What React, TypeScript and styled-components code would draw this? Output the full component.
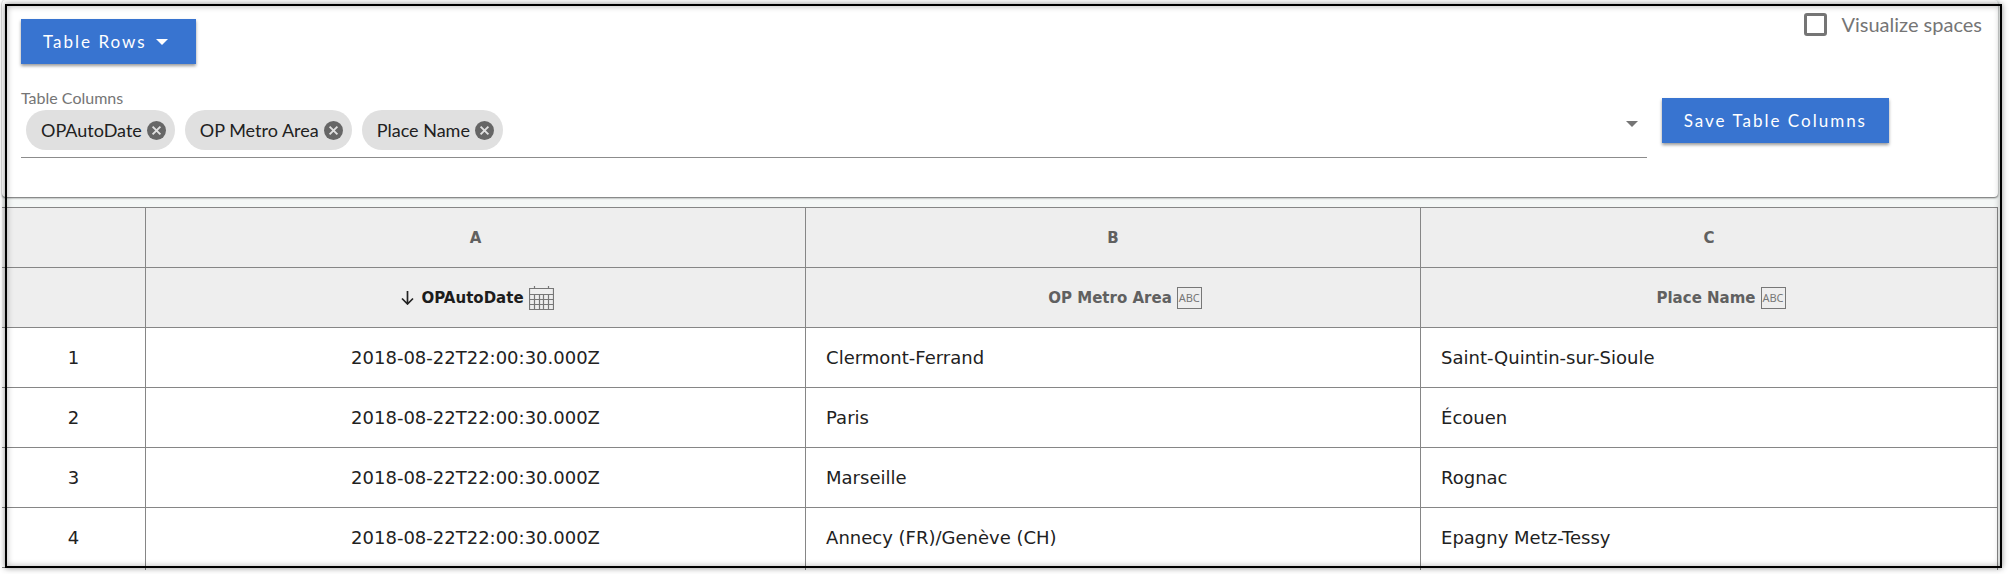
import React, { useState } from "react";
import styled, { createGlobalStyle } from "styled-components";

const GlobalStyle = createGlobalStyle`
  *, *::before, *::after { box-sizing: border-box; }
  body { margin: 0; background: #fff; }
`;

const UI_FONT = `Lato, "Liberation Sans", sans-serif`;
const GRID_FONT = `"DejaVu Sans", Verdana, sans-serif`;
const LINE = "#868686";

const Page = styled.div`
  position: relative;
  padding: 0 11px 4px 2px;
  font-family: ${UI_FONT};
  color: #212121;
`;

const Surface = styled.div`
  background: #f4f7f6;
  padding-right: 2px;
`;

const Frame = styled.div`
  position: absolute;
  inset: 4px 9px 6px 5px;
  border: 2px solid #000;
  box-shadow: 0 0 6px rgba(0, 0, 0, 0.45), inset 0 0 6px rgba(0, 0, 0, 0.3);
  pointer-events: none;
`;

const Card = styled.section`
  display: flex;
  flex-direction: column;
  gap: 26px;
  padding: 12px 16px 39px 19px;
  background: #fff;
  border-radius: 4px;
  box-shadow: 0 1px 2px rgba(0, 0, 0, 0.6);
`;

const TopBar = styled.div`
  display: flex;
  align-items: flex-end;
  justify-content: space-between;
  min-height: 52px;
`;

const Button = styled.button<{ $menu?: boolean }>`
  display: inline-flex;
  align-items: center;
  gap: 9px;
  height: 45px;
  padding: 0 ${(p) => (p.$menu ? 28 : 22)}px 0 22px;
  border: 0;
  background: #3874d0;
  color: #fff;
  font: 400 17px/24px ${UI_FONT};
  letter-spacing: 2px;
  white-space: nowrap;
  box-shadow: 0 2px 3px rgba(0, 0, 0, 0.4);
  cursor: pointer;
`;

const CheckLabel = styled.label`
  display: flex;
  align-items: center;
  align-self: flex-start;
  gap: 14px;
  color: #757575;
  font-size: 20px;
  line-height: 24px;
`;

const CheckBox = styled.input`
  appearance: none;
  width: 23px;
  height: 23px;
  margin: 0;
  border: 3px solid #757575;
  border-radius: 3px;
  background: #fff;
  &:checked { background: #3874d0; }
`;

const FieldRow = styled.div`
  display: flex;
  gap: 15px;
  padding-right: 93px;
`;

const Field = styled.div`
  flex: 1;
  border-bottom: 1px solid #8c8c8c;
`;

const FieldLabel = styled.label`
  display: block;
  color: #757575;
  font-size: 16px;
  line-height: 16px;
`;

const ChipBox = styled.div`
  display: flex;
  gap: 10px;
  padding: 4px 9px 7px 5px;
`;

const Chip = styled.span`
  display: inline-flex;
  align-items: center;
  gap: 5px;
  height: 40px;
  padding: 0 9px 0 15px;
  border-radius: 20px;
  background: #e0e0e0;
  font-size: 18px;
  line-height: 24px;
  white-space: nowrap;
`;

const IconButton = styled.button<{ $light?: boolean }>`
  display: inline-flex;
  align-items: center;
  justify-content: center;
  height: 28px;
  padding: 0;
  border: 0;
  background: none;
  color: ${(p) => (p.$light ? "#757575" : "#666")};
  cursor: pointer;
`;

const ChipInput = styled.input`
  flex: 1;
  min-width: 0;
  border: 0;
  outline: 0;
  background: none;
  font: 18px/24px ${UI_FONT};
`;

const Action = styled.div`
  display: flex;
  align-items: flex-start;
  padding-top: 8px;
`;

const Table = styled.table`
  width: 100%;
  margin-top: 10px;
  table-layout: fixed;
  border-collapse: separate;
  border-spacing: 0;
  border-top: 1px solid ${LINE};
  background: #fff;
  font-family: ${GRID_FONT};
`;

const Col = styled.col<{ $width?: string }>`
  width: ${(p) => p.$width ?? "auto"};
`;

const HeadCell = styled.th<{ $active?: boolean }>`
  height: 60px;
  padding: 0 20px;
  border-right: 1px solid ${LINE};
  border-bottom: 1px solid ${LINE};
  background: #eee;
  color: ${(p) => (p.$active ? "#1c1c1c" : "#606060")};
  font-size: 15px;
  font-weight: 700;
  line-height: 24px;
`;

const HeadContent = styled.span`
  display: flex;
  align-items: center;
  justify-content: center;
  gap: 5px;
`;

const SortSlot = styled.span`
  display: inline-flex;
  justify-content: center;
  width: 19px;
`;

const Cell = styled.td<{ $center?: boolean }>`
  height: 60px;
  padding: 0 20px;
  border-right: 1px solid ${LINE};
  border-bottom: 1px solid ${LINE};
  text-align: ${(p) => (p.$center ? "center" : "left")};
  font-size: 18px;
  line-height: 24px;
`;

const NextCell = styled.td`
  height: 2px;
  padding: 0;
  border-right: 1px solid ${LINE};
`;

const TextType = styled.span`
  display: inline-flex;
  align-items: center;
  justify-content: center;
  width: 25px;
  height: 22px;
  border: 1px solid #777;
  color: #777;
  font: 400 11px/12px "Noto Sans", sans-serif;
`;

const Caret = () => (
  <svg width="12" height="6" viewBox="0 0 12 6" aria-hidden="true">
    <path d="M0 0h12L6 6z" fill="currentColor" />
  </svg>
);

const RemoveIcon = () => (
  <svg width="19" height="19" viewBox="0 0 19 19" aria-hidden="true">
    <circle cx="9.5" cy="9.5" r="9.5" fill="currentColor" />
    <path d="M5.6 5.6l7.8 7.8M13.4 5.6l-7.8 7.8" stroke="#e0e0e0" strokeWidth="1.9" />
  </svg>
);

const SortIcon = () => (
  <svg width="13" height="14" viewBox="0 0 13 14" fill="none" stroke="#222" strokeWidth="1.7" aria-hidden="true">
    <path d="M6.5 0v13M1 7.5L6.5 13 12 7.5" />
  </svg>
);

const CalendarIcon = () => (
  <svg width="25" height="24" viewBox="0 0 25 24" fill="none" stroke="#777" aria-hidden="true">
    <path d="M.5 2.5h24v21H.5zM5.5 0v2.5M19.5 0v2.5M.5 8.5h24M.5 13.5h24M.5 18.5h24M5.5 8.5v15M10.5 8.5v15M14.5 8.5v15M19.5 8.5v15" strokeWidth="1.2" />
  </svg>
);

const columns = [
  { letter: "A", name: "OPAutoDate", type: "date" },
  { letter: "B", name: "OP Metro Area", type: "text" },
  { letter: "C", name: "Place Name", type: "text" },
];

const rows = [
  ["2018-08-22T22:00:30.000Z", "Clermont-Ferrand", "Saint-Quintin-sur-Sioule"],
  ["2018-08-22T22:00:30.000Z", "Paris", "Écouen"],
  ["2018-08-22T22:00:30.000Z", "Marseille", "Rognac"],
  ["2018-08-22T22:00:30.000Z", "Annecy (FR)/Genève (CH)", "Epagny Metz-Tessy"],
];

export default function App() {
  const [spaces, setSpaces] = useState(false);
  return (
    <Page>
      <GlobalStyle />
      <Surface>
        <Card>
          <TopBar>
            <Button type="button" aria-haspopup="menu" $menu>
              Table Rows <Caret />
            </Button>
            <CheckLabel>
              <CheckBox type="checkbox" checked={spaces} onChange={(e) => setSpaces(e.target.checked)} />
              Visualize spaces
            </CheckLabel>
          </TopBar>
          <FieldRow>
            <Field>
              <FieldLabel htmlFor="table-columns">Table Columns</FieldLabel>
              <ChipBox>
                {columns.map((c) => (
                  <Chip key={c.name}>
                    {c.name}
                    <IconButton type="button" aria-label={`Remove ${c.name}`}>
                      <RemoveIcon />
                    </IconButton>
                  </Chip>
                ))}
                <ChipInput id="table-columns" type="text" />
                <IconButton type="button" aria-label="Show columns" $light>
                  <Caret />
                </IconButton>
              </ChipBox>
            </Field>
            <Action>
              <Button type="button">Save Table Columns</Button>
            </Action>
          </FieldRow>
        </Card>
        <Table>
          <colgroup>
            <Col $width="144px" />
            <Col $width="33.07%" />
            <Col $width="30.81%" />
            <Col />
          </colgroup>
          <thead>
            <tr>
              <HeadCell />
              {columns.map((c) => (
                <HeadCell key={c.letter} scope="col">{c.letter}</HeadCell>
              ))}
            </tr>
            <tr>
              <HeadCell />
              {columns.map((c) => (
                <HeadCell key={c.name} scope="col" $active={c.type === "date"}>
                  <HeadContent>
                    <SortSlot>{c.type === "date" && <SortIcon />}</SortSlot>
                    {c.name}
                    {c.type === "date" ? <CalendarIcon /> : <TextType>ABC</TextType>}
                  </HeadContent>
                </HeadCell>
              ))}
            </tr>
          </thead>
          <tbody>
            {rows.map((r, i) => (
              <tr key={i}>
                <Cell $center>{i + 1}</Cell>
                <Cell $center>{r[0]}</Cell>
                <Cell>{r[1]}</Cell>
                <Cell>{r[2]}</Cell>
              </tr>
            ))}
            <tr>
              <NextCell />
              <NextCell />
              <NextCell />
              <NextCell />
            </tr>
          </tbody>
        </Table>
      </Surface>
      <Frame />
    </Page>
  );
}
